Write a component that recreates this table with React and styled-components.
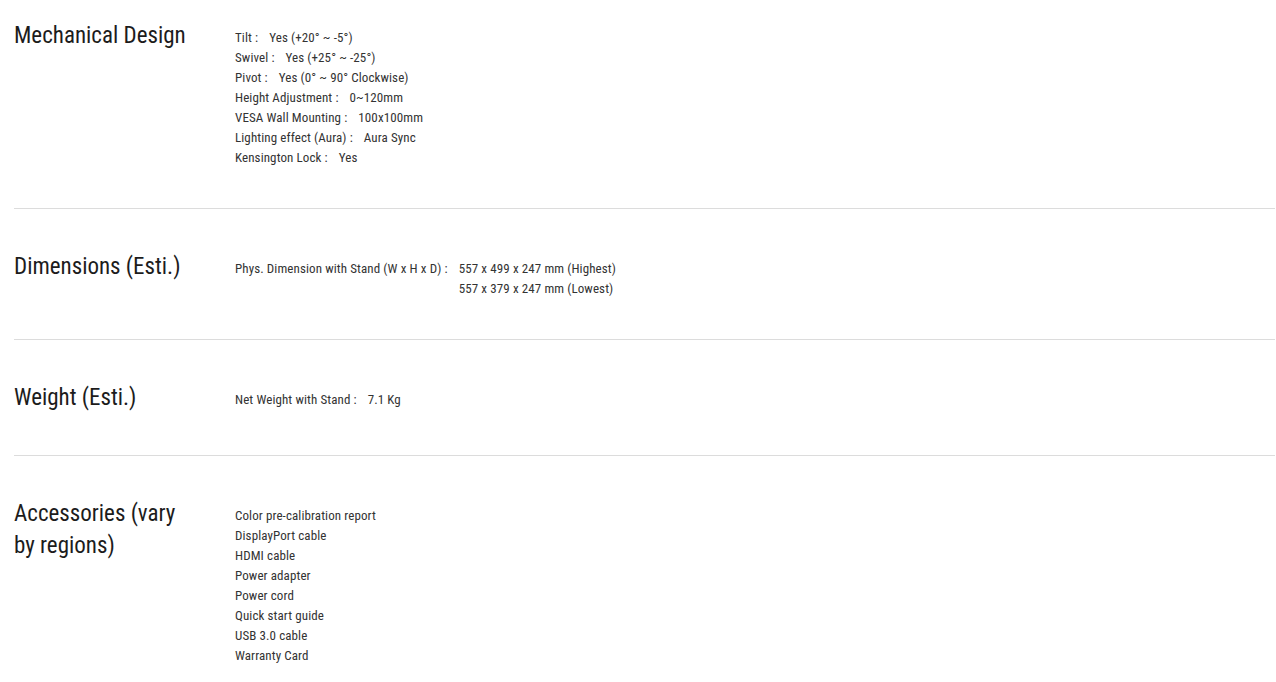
import React from 'react';
import styled, { createGlobalStyle } from 'styled-components';

const GlobalStyle = createGlobalStyle`
  body {
    margin: 0;
    background: #fff;
    font-family: "Roboto Condensed", Roboto, "Liberation Sans", sans-serif;
  }
`;

const Page = styled.div`
  padding: 0 1px 0 14px;
`;

const Section = styled.div`
  display: flex;
  align-items: flex-start;
  padding: 41px 0 41px;
  border-top: 1px solid #dcdcdc;

  &:first-child {
    padding-top: 19px;
    border-top: none;
  }
`;

const Title = styled.h2`
  flex: 0 0 178px;
  width: 178px;
  margin: 1px 43px 0 0;
  font-size: 23px;
  line-height: 32px;
  font-weight: 400;
  color: #1c1c1c;
`;

const Specs = styled.div`
  margin: 9px 0 -1px;
  font-size: 13px;
  line-height: 20px;
  letter-spacing: 0.1px;
  color: #333;
`;

const SpecRow = styled.div`
  display: flex;
`;

const Label = styled.span`
  white-space: pre;
  margin-right: 11px;
`;

const Values = styled.div``;

const sections = [
  {
    title: 'Mechanical Design',
    rows: [
      ['Tilt :', ['Yes (+20° ~ -5°)']],
      ['Swivel :', ['Yes (+25° ~ -25°)']],
      ['Pivot :', ['Yes (0° ~ 90° Clockwise)']],
      ['Height Adjustment :', ['0~120mm']],
      ['VESA Wall Mounting :', ['100x100mm']],
      ['Lighting effect (Aura) :', ['Aura Sync']],
      ['Kensington Lock :', ['Yes']],
    ],
  },
  {
    title: 'Dimensions (Esti.)',
    rows: [
      ['Phys. Dimension with Stand (W x H x D) :', ['557 x 499 x 247 mm (Highest)', '557 x 379 x 247 mm (Lowest)']],
    ],
  },
  {
    title: 'Weight (Esti.)',
    rows: [['Net Weight with Stand :', ['7.1 Kg']]],
  },
  {
    title: 'Accessories (vary by regions)',
    items: [
      'Color pre-calibration report',
      'DisplayPort cable',
      'HDMI cable',
      'Power adapter',
      'Power cord',
      'Quick start guide',
      'USB 3.0 cable',
      'Warranty Card',
    ],
  },
];

export default function App() {
  return (
    <>
      <GlobalStyle />
      <Page>
        {sections.map((s) => (
          <Section key={s.title}>
            <Title>{s.title}</Title>
            <Specs>
              {s.rows &&
                s.rows.map(([label, values]) => (
                  <SpecRow key={label}>
                    <Label>{label}</Label>
                    <Values>
                      {values.map((v) => (
                        <div key={v}>{v}</div>
                      ))}
                    </Values>
                  </SpecRow>
                ))}
              {s.items && s.items.map((item) => <div key={item}>{item}</div>)}
            </Specs>
          </Section>
        ))}
      </Page>
    </>
  );
}
